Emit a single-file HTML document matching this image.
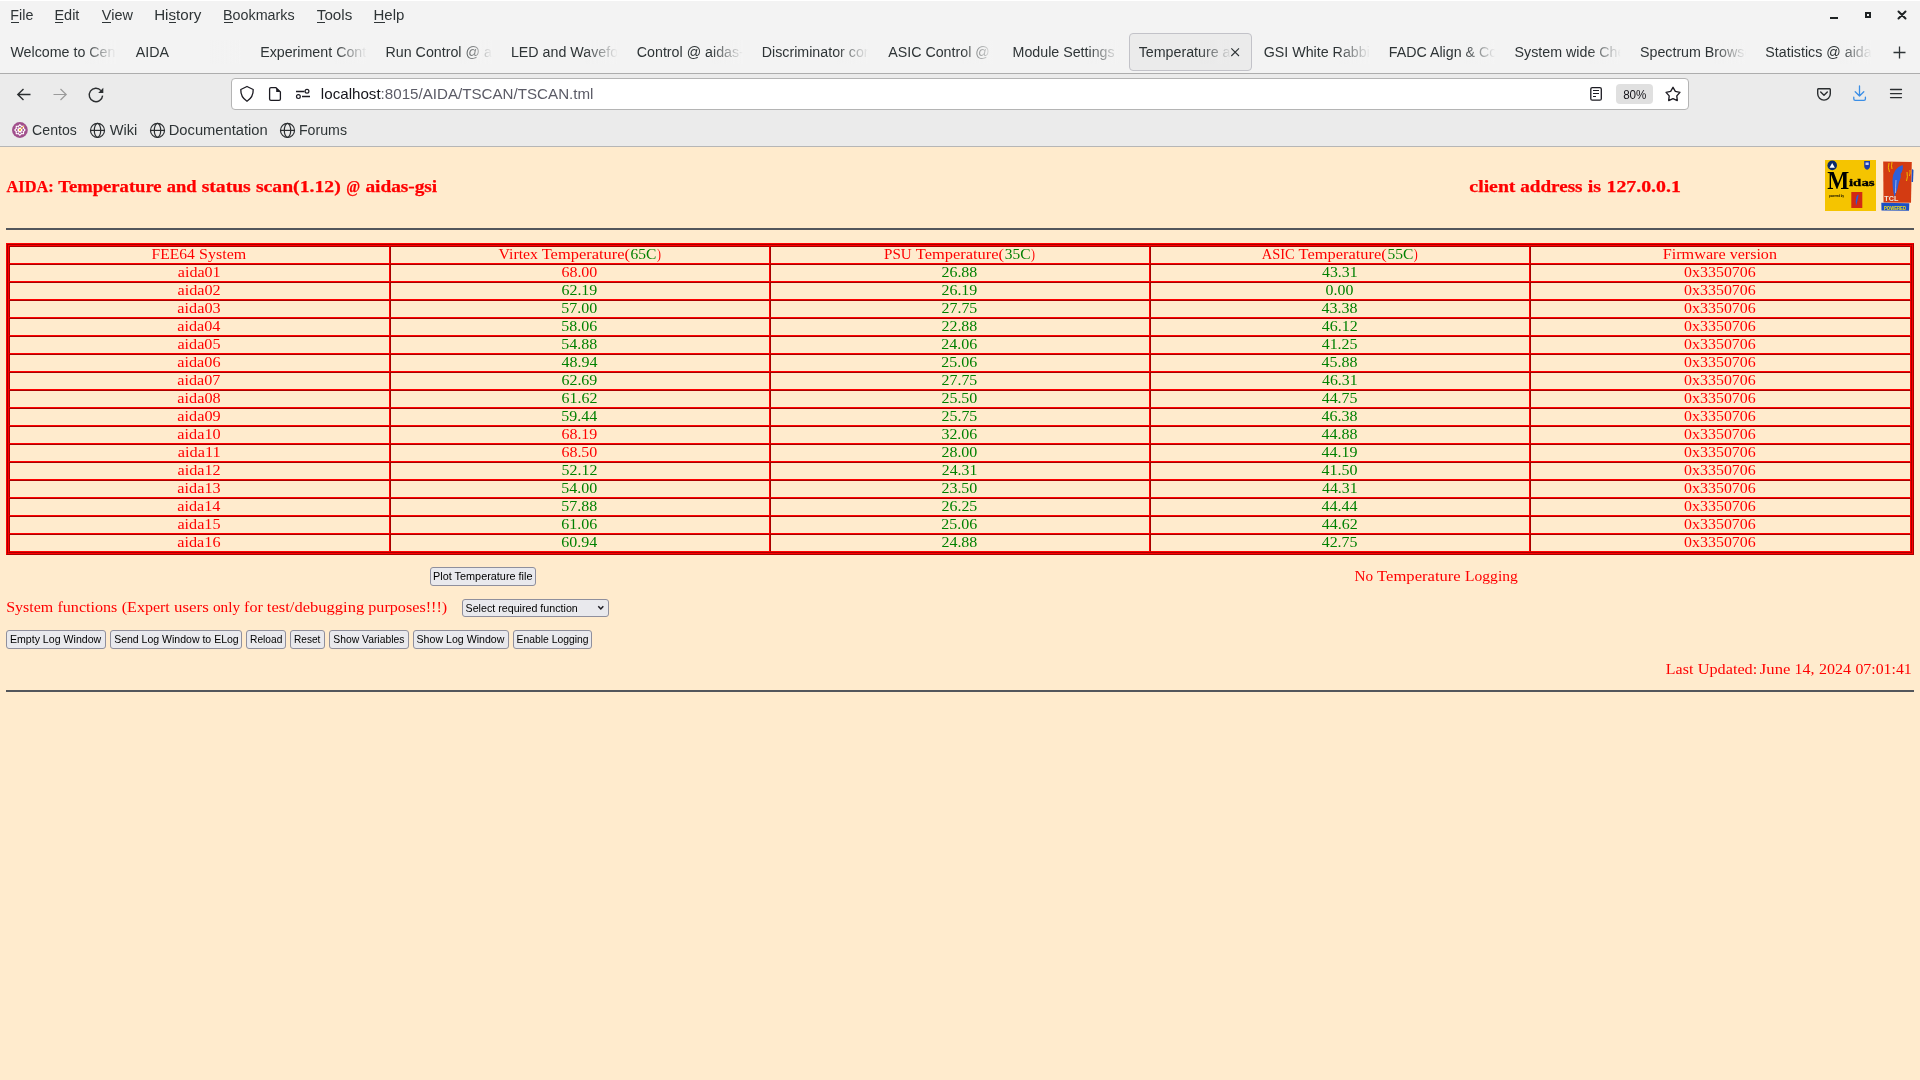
<!DOCTYPE html>
<html><head><meta charset="utf-8"><title>Temperature and status scan</title>
<style>
html,body{margin:0;padding:0}
body{width:1920px;height:1080px;overflow:hidden;position:relative;background:#ffebcd;font-family:"Liberation Sans",sans-serif}
.a{position:absolute}
td,th{box-sizing:border-box;height:18px;padding:0;border-style:solid;border-width:1px;border-color:#a80000 #ff0000 #ff0000 #a80000}
.btn{position:absolute;box-sizing:border-box;border:1px solid #8f8f9d;border-radius:3px;background:#e9e9ed}
svg{position:absolute;left:0;top:0;overflow:visible;will-change:transform}
</style></head><body>
<!-- browser chrome -->
<div class="a" style="left:0;top:0;width:1920px;height:73px;background:#f3f3f3"></div>
<div class="a" style="left:0;top:0;width:1920px;height:1px;background:#ffffff"></div>
<div class="a" style="left:0;top:73px;width:1920px;height:1px;background:#adadad"></div>
<div class="a" style="left:0;top:74px;width:1920px;height:72px;background:#ebebeb"></div>
<div class="a" style="left:0;top:146px;width:1920px;height:1px;background:#b6b6b6"></div>
<div class="a" style="left:11px;top:22px;width:8px;height:1px;background:#2e3436"></div>
<div class="a" style="left:55px;top:22px;width:8px;height:1px;background:#2e3436"></div>
<div class="a" style="left:102px;top:22px;width:9px;height:1px;background:#2e3436"></div>
<div class="a" style="left:169px;top:22px;width:7px;height:1px;background:#2e3436"></div>
<div class="a" style="left:224px;top:22px;width:9px;height:1px;background:#2e3436"></div>
<div class="a" style="left:317px;top:22px;width:8px;height:1px;background:#2e3436"></div>
<div class="a" style="left:374px;top:22px;width:11px;height:1px;background:#2e3436"></div>
<div class="a" style="left:1129px;top:33px;width:123px;height:38px;box-sizing:border-box;border:1px solid #c2c2c8;border-radius:4px;background:#ebebeb"></div>
<div class="a" style="left:231px;top:78px;width:1458px;height:32px;box-sizing:border-box;border:1px solid #b4b4b4;border-radius:4px;background:#ffffff"></div>
<div class="a" style="left:1616px;top:84px;width:37px;height:20px;border-radius:4px;background:#e0e0e0"></div>
<!-- page -->
<div class="a" style="left:6px;top:228px;width:1908px;height:2px;background:#53565b"></div>
<div class="a" style="left:6px;top:690px;width:1908px;height:2px;background:#53565b"></div>
<div class="a" style="left:6px;top:243px;width:1908px;height:312px;box-sizing:border-box;border:1px solid;border-color:#ff0000 #a80000 #a80000 #ff0000"></div>
<div class="a" style="left:7px;top:244px;width:1906px;height:310px;box-sizing:border-box;border:1px solid;border-color:#a80000 #ff0000 #ff0000 #a80000"></div>
<div class="a" style="left:8px;top:245px;width:1904px;height:308px;box-sizing:border-box;border:1px solid;border-color:#ff0000 #a80000 #a80000 #ff0000"></div>
<table class="a" style="left:9px;top:246px;border-collapse:separate;border-spacing:0;table-layout:fixed;width:1902px"><tr><th style="width:381px"></th><th style="width:380px"></th><th style="width:380px"></th><th style="width:380px"></th><th style="width:381px"></th></tr>
<tr><td style="width:381px"></td><td style="width:380px"></td><td style="width:380px"></td><td style="width:380px"></td><td style="width:381px"></td></tr>
<tr><td style="width:381px"></td><td style="width:380px"></td><td style="width:380px"></td><td style="width:380px"></td><td style="width:381px"></td></tr>
<tr><td style="width:381px"></td><td style="width:380px"></td><td style="width:380px"></td><td style="width:380px"></td><td style="width:381px"></td></tr>
<tr><td style="width:381px"></td><td style="width:380px"></td><td style="width:380px"></td><td style="width:380px"></td><td style="width:381px"></td></tr>
<tr><td style="width:381px"></td><td style="width:380px"></td><td style="width:380px"></td><td style="width:380px"></td><td style="width:381px"></td></tr>
<tr><td style="width:381px"></td><td style="width:380px"></td><td style="width:380px"></td><td style="width:380px"></td><td style="width:381px"></td></tr>
<tr><td style="width:381px"></td><td style="width:380px"></td><td style="width:380px"></td><td style="width:380px"></td><td style="width:381px"></td></tr>
<tr><td style="width:381px"></td><td style="width:380px"></td><td style="width:380px"></td><td style="width:380px"></td><td style="width:381px"></td></tr>
<tr><td style="width:381px"></td><td style="width:380px"></td><td style="width:380px"></td><td style="width:380px"></td><td style="width:381px"></td></tr>
<tr><td style="width:381px"></td><td style="width:380px"></td><td style="width:380px"></td><td style="width:380px"></td><td style="width:381px"></td></tr>
<tr><td style="width:381px"></td><td style="width:380px"></td><td style="width:380px"></td><td style="width:380px"></td><td style="width:381px"></td></tr>
<tr><td style="width:381px"></td><td style="width:380px"></td><td style="width:380px"></td><td style="width:380px"></td><td style="width:381px"></td></tr>
<tr><td style="width:381px"></td><td style="width:380px"></td><td style="width:380px"></td><td style="width:380px"></td><td style="width:381px"></td></tr>
<tr><td style="width:381px"></td><td style="width:380px"></td><td style="width:380px"></td><td style="width:380px"></td><td style="width:381px"></td></tr>
<tr><td style="width:381px"></td><td style="width:380px"></td><td style="width:380px"></td><td style="width:380px"></td><td style="width:381px"></td></tr>
<tr><td style="width:381px"></td><td style="width:380px"></td><td style="width:380px"></td><td style="width:380px"></td><td style="width:381px"></td></tr></table>
<div class="btn" style="left:430px;top:567px;width:106px;height:19px"></div>
<div class="btn" style="left:6px;top:630px;width:100px;height:19px"></div>
<div class="btn" style="left:110px;top:630px;width:132px;height:19px"></div>
<div class="btn" style="left:246px;top:630px;width:40px;height:19px"></div>
<div class="btn" style="left:290px;top:630px;width:35px;height:19px"></div>
<div class="btn" style="left:329px;top:630px;width:80px;height:19px"></div>
<div class="btn" style="left:413px;top:630px;width:96px;height:19px"></div>
<div class="btn" style="left:513px;top:630px;width:79px;height:19px"></div>
<div class="btn" style="left:462px;top:599px;width:147px;height:18px"></div>
<svg width="1920" height="1080" viewBox="0 0 1920 1080">
<defs><clipPath id="tc0"><rect x="8.4" y="36" width="108" height="30"/></clipPath>
<linearGradient id="tg0" x1="0" x2="1" y1="0" y2="0"><stop offset="0" stop-color="#f3f3f3" stop-opacity="0"/><stop offset="1" stop-color="#f3f3f3" stop-opacity="1"/></linearGradient>
<clipPath id="tc1"><rect x="133.8" y="36" width="108" height="30"/></clipPath>
<linearGradient id="tg1" x1="0" x2="1" y1="0" y2="0"><stop offset="0" stop-color="#f3f3f3" stop-opacity="0"/><stop offset="1" stop-color="#f3f3f3" stop-opacity="1"/></linearGradient>
<clipPath id="tc2"><rect x="259.2" y="36" width="108" height="30"/></clipPath>
<linearGradient id="tg2" x1="0" x2="1" y1="0" y2="0"><stop offset="0" stop-color="#f3f3f3" stop-opacity="0"/><stop offset="1" stop-color="#f3f3f3" stop-opacity="1"/></linearGradient>
<clipPath id="tc3"><rect x="384.6" y="36" width="108" height="30"/></clipPath>
<linearGradient id="tg3" x1="0" x2="1" y1="0" y2="0"><stop offset="0" stop-color="#f3f3f3" stop-opacity="0"/><stop offset="1" stop-color="#f3f3f3" stop-opacity="1"/></linearGradient>
<clipPath id="tc4"><rect x="510.0" y="36" width="108" height="30"/></clipPath>
<linearGradient id="tg4" x1="0" x2="1" y1="0" y2="0"><stop offset="0" stop-color="#f3f3f3" stop-opacity="0"/><stop offset="1" stop-color="#f3f3f3" stop-opacity="1"/></linearGradient>
<clipPath id="tc5"><rect x="635.4" y="36" width="108" height="30"/></clipPath>
<linearGradient id="tg5" x1="0" x2="1" y1="0" y2="0"><stop offset="0" stop-color="#f3f3f3" stop-opacity="0"/><stop offset="1" stop-color="#f3f3f3" stop-opacity="1"/></linearGradient>
<clipPath id="tc6"><rect x="760.8" y="36" width="108" height="30"/></clipPath>
<linearGradient id="tg6" x1="0" x2="1" y1="0" y2="0"><stop offset="0" stop-color="#f3f3f3" stop-opacity="0"/><stop offset="1" stop-color="#f3f3f3" stop-opacity="1"/></linearGradient>
<clipPath id="tc7"><rect x="886.2" y="36" width="108" height="30"/></clipPath>
<linearGradient id="tg7" x1="0" x2="1" y1="0" y2="0"><stop offset="0" stop-color="#f3f3f3" stop-opacity="0"/><stop offset="1" stop-color="#f3f3f3" stop-opacity="1"/></linearGradient>
<clipPath id="tc8"><rect x="1011.6" y="36" width="108" height="30"/></clipPath>
<linearGradient id="tg8" x1="0" x2="1" y1="0" y2="0"><stop offset="0" stop-color="#f3f3f3" stop-opacity="0"/><stop offset="1" stop-color="#f3f3f3" stop-opacity="1"/></linearGradient>
<clipPath id="tc9"><rect x="1137.0" y="36" width="95" height="30"/></clipPath>
<linearGradient id="tg9" x1="0" x2="1" y1="0" y2="0"><stop offset="0" stop-color="#ebebeb" stop-opacity="0"/><stop offset="1" stop-color="#ebebeb" stop-opacity="1"/></linearGradient>
<clipPath id="tc10"><rect x="1262.4" y="36" width="108" height="30"/></clipPath>
<linearGradient id="tg10" x1="0" x2="1" y1="0" y2="0"><stop offset="0" stop-color="#f3f3f3" stop-opacity="0"/><stop offset="1" stop-color="#f3f3f3" stop-opacity="1"/></linearGradient>
<clipPath id="tc11"><rect x="1387.8" y="36" width="108" height="30"/></clipPath>
<linearGradient id="tg11" x1="0" x2="1" y1="0" y2="0"><stop offset="0" stop-color="#f3f3f3" stop-opacity="0"/><stop offset="1" stop-color="#f3f3f3" stop-opacity="1"/></linearGradient>
<clipPath id="tc12"><rect x="1513.2" y="36" width="108" height="30"/></clipPath>
<linearGradient id="tg12" x1="0" x2="1" y1="0" y2="0"><stop offset="0" stop-color="#f3f3f3" stop-opacity="0"/><stop offset="1" stop-color="#f3f3f3" stop-opacity="1"/></linearGradient>
<clipPath id="tc13"><rect x="1638.6" y="36" width="108" height="30"/></clipPath>
<linearGradient id="tg13" x1="0" x2="1" y1="0" y2="0"><stop offset="0" stop-color="#f3f3f3" stop-opacity="0"/><stop offset="1" stop-color="#f3f3f3" stop-opacity="1"/></linearGradient>
<clipPath id="tc14"><rect x="1764.0" y="36" width="108" height="30"/></clipPath>
<linearGradient id="tg14" x1="0" x2="1" y1="0" y2="0"><stop offset="0" stop-color="#f3f3f3" stop-opacity="0"/><stop offset="1" stop-color="#f3f3f3" stop-opacity="1"/></linearGradient></defs>
<!-- window controls -->
<rect x="1830" y="17" width="8" height="2" fill="#1f2324"/>
<rect x="1866" y="13" width="4" height="4" fill="none" stroke="#1f2324" stroke-width="2"/>
<path d="M1898.5 11.5 L1905.5 18.5 M1905.5 11.5 L1898.5 18.5" stroke="#1f2324" stroke-width="2" stroke-linecap="round"/>
<path d="M1899.5 46.5 V58.5 M1893.5 52.5 H1905.5" stroke="#2e3436" stroke-width="1.3"/>
<!-- tab close -->

<!-- nav -->
<path d="M17.5 94.5 H30.5 M23.5 89 L17.8 94.5 L23.5 100" fill="none" stroke="#2b2e30" stroke-width="1.4"/>
<path d="M66.5 94.5 H53.5 M60.5 89 L66.2 94.5 L60.5 100" fill="none" stroke="#9a9a9a" stroke-width="1.2"/>
<path d="M102.6 95.6 A6.7 6.7 0 1 1 101 90.6" fill="none" stroke="#2b2e30" stroke-width="1.4"/>
<path d="M98.2 92.9 L103.3 92.9 L103.3 87.8 Z" fill="#2b2e30"/>
<!-- url icons -->
<path d="M247 86.5 L253.2 89.5 Q253.5 97 247 101.3 Q240.5 97 240.8 89.5 Z" fill="none" stroke="#1c1b22" stroke-width="1.3" stroke-linejoin="round"/>
<path d="M276 87.7 H271 Q269.6 87.7 269.6 89 V99 Q269.6 100.3 271 100.3 H279 Q280.4 100.3 280.4 99 V92 Z" fill="none" stroke="#1c1b22" stroke-width="1.3" stroke-linejoin="round"/>
<path d="M276.2 87.7 L280.4 92 L276.2 92 Z" fill="#1c1b22"/>
<path d="M296 91.5 H304.5 M302 96.5 H310" stroke="#1c1b22" stroke-width="1.3"/>
<circle cx="307" cy="91.3" r="1.9" fill="none" stroke="#1c1b22" stroke-width="1.2"/>
<circle cx="298.4" cy="96.6" r="1.9" fill="none" stroke="#1c1b22" stroke-width="1.2"/>
<!-- reader -->
<rect x="1590.8" y="87.6" width="10.5" height="12.6" rx="1.5" fill="none" stroke="#1c1b22" stroke-width="1.3"/>
<path d="M1593 90.5 H1599 M1593 93.5 H1599 M1593 96.5 H1596" stroke="#1c1b22" stroke-width="1.1"/>
<!-- star -->
<polygon points="1673.00,87.30 1670.65,91.36 1666.06,92.34 1669.20,95.84 1668.71,100.51 1673.00,98.60 1677.29,100.51 1676.80,95.84 1679.94,92.34 1675.35,91.36" fill="none" stroke="#1c1b22" stroke-width="1.35" stroke-linejoin="round"/>
<!-- pocket -->
<path d="M1818.3 88.7 H1829.7 Q1830.3 88.7 1830.3 89.5 V93.8 A6.3 6.3 0 0 1 1817.7 93.8 V89.5 Q1817.7 88.7 1818.3 88.7 Z" fill="none" stroke="#2b2e30" stroke-width="1.4"/>
<path d="M1820.7 92 L1824 95.2 L1827.3 92" fill="none" stroke="#2b2e30" stroke-width="1.4" stroke-linecap="round" stroke-linejoin="round"/>
<!-- download -->
<path d="M1859.5 86 V96 M1855.2 91.8 L1859.5 96 L1863.8 91.8" fill="none" stroke="#3a8ee6" stroke-width="1.3" stroke-linecap="round" stroke-linejoin="round"/>
<path d="M1853.8 97.2 V99 Q1853.8 100.4 1855.2 100.4 H1864 Q1865.4 100.4 1865.4 99 V97.2" fill="none" stroke="#3a8ee6" stroke-width="1.3" stroke-linecap="round"/>
<!-- hamburger -->
<path d="M1890.5 89.5 H1901.5 M1890.5 93.6 H1901.5 M1890.5 97.6 H1901.5" stroke="#2b2e30" stroke-width="1.3" stroke-linecap="round"/>
<!-- bookmark icons -->
<circle cx="19.9" cy="130.0" r="7.9" fill="#a14f8c"/><polygon points="19.90,124.10 18.14,125.75 15.73,125.83 15.65,128.24 14.00,130.00 15.65,131.76 15.73,134.17 18.14,134.25 19.90,135.90 21.66,134.25 24.07,134.17 24.15,131.76 25.80,130.00 24.15,128.24 24.07,125.83 21.66,125.75" fill="#ffffff"/><g fill="#a14f8c"><circle cx="19.90" cy="126.80" r="1"/><circle cx="17.64" cy="127.74" r="1"/><circle cx="16.70" cy="130.00" r="1"/><circle cx="17.64" cy="132.26" r="1"/><circle cx="19.90" cy="133.20" r="1"/><circle cx="22.16" cy="132.26" r="1"/><circle cx="23.10" cy="130.00" r="1"/><circle cx="22.16" cy="127.74" r="1"/></g><rect x="19.0" y="129.1" width="1.8" height="1.8" fill="#efa724"/><path d="M19.9 130.0 L24.2 125.7" stroke="#efa724" stroke-width="0.9"/>
<g fill="none" stroke="#2b2e30" stroke-width="1.2">
<circle cx="97.5" cy="130.4" r="7"/><ellipse cx="97.5" cy="130.4" rx="3.2" ry="7"/><path d="M90.5 130.4 H104.5"/>
<circle cx="157.5" cy="130.4" r="7"/><ellipse cx="157.5" cy="130.4" rx="3.2" ry="7"/><path d="M150.5 130.4 H164.5"/>
<circle cx="287.5" cy="130.4" r="7"/><ellipse cx="287.5" cy="130.4" rx="3.2" ry="7"/><path d="M280.5 130.4 H294.5"/>
</g>
<!-- select chevron -->
<path d="M598.3 606.3 L600.8 609 L603.3 606.3" fill="none" stroke="#1c1b22" stroke-width="1.5"/>
<!-- midas logo -->
<rect x="1825" y="160" width="51" height="51" fill="#f5c400"/>
<circle cx="1832.2" cy="165.4" r="4.8" fill="#0b2a6b"/>
<path d="M1829.5 167.8 L1832.2 163 L1834.9 167.8 Z" fill="#ffffff"/>
<path d="M1864.2 161 H1870 V166 Q1870 168.8 1867.1 169.8 Q1864.2 168.8 1864.2 166 Z" fill="#1a3aa8"/>
<path d="M1865.5 162.5 H1868.7 V165 H1865.5 Z" fill="#c8d0f0"/>
<text x="1827.2" y="188.5" font-family="Liberation Serif" font-weight="bold" font-size="25" fill="#000" textLength="22" lengthAdjust="spacingAndGlyphs" stroke="#ffe000" stroke-width="0.4" paint-order="stroke">M</text>
<text x="1849" y="185.8" font-family="Liberation Serif" font-weight="bold" font-size="11" fill="#000" textLength="25.6" lengthAdjust="spacingAndGlyphs" stroke="#000" stroke-width="0.3">idas</text>
<text x="1829" y="197" font-family="Liberation Sans" font-weight="bold" font-size="3.8" fill="#000" textLength="15" lengthAdjust="spacingAndGlyphs">powered by</text>
<rect x="1851.3" y="192" width="11" height="16" fill="#d22a12"/>
<path d="M1857.8 194.5 Q1855 198 1856 206 Q1857.8 200 1858.6 195 Z" fill="#2a5ad8"/>
<!-- tcl logo -->
<path d="M1883.2 161.5 L1911.8 162 L1911 202.8 L1883.5 202.5 Z" fill="#d33b12"/>
<path d="M1881.3 202.8 L1909.3 203.2 L1909 210.8 L1881.5 210.5 Z" fill="#1b4fc4"/>
<path d="M1912 169 L1913.5 170 L1913 182 L1911.5 182 Z" fill="#1b4fc4"/>
<path d="M1902.5 165 Q1893 168 1892.5 180 Q1892.5 190 1894.5 197 Q1898 189 1899 182 Q1901.5 177 1900.5 174 Q1904 169 1902.5 165 Z" fill="#2f5fd8"/><path d="M1896 180 Q1895.5 188 1895.5 193" stroke="#e8e8f0" stroke-width="0.6" fill="none"/>
<path d="M1889 163 Q1887.5 168 1889.5 172 M1892 162 Q1891 166 1892 169 M1906.5 181 Q1908 177 1907 172 M1909.5 176 Q1910.5 173 1910 170" stroke="#f2b800" stroke-width="1" fill="none"/>
<text x="1884.3" y="200.8" font-family="Liberation Sans" font-weight="bold" font-size="6.5" fill="#f0e8e0" textLength="14" lengthAdjust="spacingAndGlyphs">TCL</text>
<text x="1884" y="209.5" font-family="Liberation Sans" font-weight="bold" font-size="6" fill="#f2e21a" textLength="22" lengthAdjust="spacingAndGlyphs">POWERED</text>
<text x="10.35" y="20" font-family="Liberation Sans" font-size="15.5" fill="#2e3436" textLength="23.01" lengthAdjust="spacingAndGlyphs">File</text>
<text x="54.43" y="20" font-family="Liberation Sans" font-size="15.5" fill="#2e3436" textLength="24.95" lengthAdjust="spacingAndGlyphs">Edit</text>
<text x="101.80" y="20" font-family="Liberation Sans" font-size="15.5" fill="#2e3436" textLength="31.05" lengthAdjust="spacingAndGlyphs">View</text>
<text x="154.18" y="20" font-family="Liberation Sans" font-size="15.5" fill="#2e3436" textLength="47.10" lengthAdjust="spacingAndGlyphs">History</text>
<text x="223.04" y="20" font-family="Liberation Sans" font-size="15.5" fill="#2e3436" textLength="71.64" lengthAdjust="spacingAndGlyphs">Bookmarks</text>
<text x="316.83" y="20" font-family="Liberation Sans" font-size="15.5" fill="#2e3436" textLength="35.42" lengthAdjust="spacingAndGlyphs">Tools</text>
<text x="373.49" y="20" font-family="Liberation Sans" font-size="15.5" fill="#2e3436" textLength="30.82" lengthAdjust="spacingAndGlyphs">Help</text>
<g clip-path="url(#tc0)"><text x="10.40" y="57" font-family="Liberation Sans" font-size="15.5" fill="#2e3436" transform="translate(10.40,0) scale(0.92,1) translate(-10.40,0)">Welcome to CentOS</text></g>
<rect x="83.4" y="40" width="33" height="24" fill="url(#tg0)"/><rect x="115.4" y="40" width="3" height="24" fill="#f3f3f3"/>
<g clip-path="url(#tc1)"><text x="135.80" y="57" font-family="Liberation Sans" font-size="15.5" fill="#2e3436" transform="translate(135.80,0) scale(0.92,1) translate(-135.80,0)">AIDA</text></g>
<rect x="208.8" y="40" width="33" height="24" fill="url(#tg1)"/><rect x="240.8" y="40" width="3" height="24" fill="#f3f3f3"/>
<g clip-path="url(#tc2)"><text x="260.05" y="57" font-family="Liberation Sans" font-size="15.5" fill="#2e3436" transform="translate(261.20,0) scale(0.92,1) translate(-261.20,0)">Experiment Control</text></g>
<rect x="334.2" y="40" width="33" height="24" fill="url(#tg2)"/><rect x="366.2" y="40" width="3" height="24" fill="#f3f3f3"/>
<g clip-path="url(#tc3)"><text x="385.45" y="57" font-family="Liberation Sans" font-size="15.5" fill="#2e3436" transform="translate(386.60,0) scale(0.92,1) translate(-386.60,0)">Run Control @ aidas-gsi</text></g>
<rect x="459.6" y="40" width="33" height="24" fill="url(#tg3)"/><rect x="491.6" y="40" width="3" height="24" fill="#f3f3f3"/>
<g clip-path="url(#tc4)"><text x="510.85" y="57" font-family="Liberation Sans" font-size="15.5" fill="#2e3436" transform="translate(512.00,0) scale(0.92,1) translate(-512.00,0)">LED and Waveform</text></g>
<rect x="585.0" y="40" width="33" height="24" fill="url(#tg4)"/><rect x="617.0" y="40" width="3" height="24" fill="#f3f3f3"/>
<g clip-path="url(#tc5)"><text x="636.71" y="57" font-family="Liberation Sans" font-size="15.5" fill="#2e3436" transform="translate(637.40,0) scale(0.92,1) translate(-637.40,0)">Control @ aidas-gsi</text></g>
<rect x="710.4" y="40" width="33" height="24" fill="url(#tg5)"/><rect x="742.4" y="40" width="3" height="24" fill="#f3f3f3"/>
<g clip-path="url(#tc6)"><text x="761.65" y="57" font-family="Liberation Sans" font-size="15.5" fill="#2e3436" transform="translate(762.80,0) scale(0.92,1) translate(-762.80,0)">Discriminator control</text></g>
<rect x="835.8" y="40" width="33" height="24" fill="url(#tg6)"/><rect x="867.8" y="40" width="3" height="24" fill="#f3f3f3"/>
<g clip-path="url(#tc7)"><text x="888.20" y="57" font-family="Liberation Sans" font-size="15.5" fill="#2e3436" transform="translate(888.20,0) scale(0.92,1) translate(-888.20,0)">ASIC Control @ aidas-gsi</text></g>
<rect x="961.2" y="40" width="33" height="24" fill="url(#tg7)"/><rect x="993.2" y="40" width="3" height="24" fill="#f3f3f3"/>
<g clip-path="url(#tc8)"><text x="1012.45" y="57" font-family="Liberation Sans" font-size="15.5" fill="#2e3436" transform="translate(1013.60,0) scale(0.92,1) translate(-1013.60,0)">Module Settings</text></g>
<rect x="1086.6" y="40" width="33" height="24" fill="url(#tg8)"/><rect x="1118.6" y="40" width="3" height="24" fill="#f3f3f3"/>
<g clip-path="url(#tc9)"><text x="1138.66" y="57" font-family="Liberation Sans" font-size="15.5" fill="#2e3436" transform="translate(1139.00,0) scale(0.92,1) translate(-1139.00,0)">Temperature and status</text></g>
<rect x="1200.0" y="40" width="32" height="24" fill="url(#tg9)"/><rect x="1231.0" y="40" width="3" height="24" fill="#ebebeb"/>
<g clip-path="url(#tc10)"><text x="1263.71" y="57" font-family="Liberation Sans" font-size="15.5" fill="#2e3436" transform="translate(1264.40,0) scale(0.92,1) translate(-1264.40,0)">GSI White Rabbit</text></g>
<rect x="1337.4" y="40" width="33" height="24" fill="url(#tg10)"/><rect x="1369.4" y="40" width="3" height="24" fill="#f3f3f3"/>
<g clip-path="url(#tc11)"><text x="1388.65" y="57" font-family="Liberation Sans" font-size="15.5" fill="#2e3436" transform="translate(1389.80,0) scale(0.92,1) translate(-1389.80,0)">FADC Align &amp; Control</text></g>
<rect x="1462.8" y="40" width="33" height="24" fill="url(#tg11)"/><rect x="1494.8" y="40" width="3" height="24" fill="#f3f3f3"/>
<g clip-path="url(#tc12)"><text x="1514.51" y="57" font-family="Liberation Sans" font-size="15.5" fill="#2e3436" transform="translate(1515.20,0) scale(0.92,1) translate(-1515.20,0)">System wide Checks</text></g>
<rect x="1588.2" y="40" width="33" height="24" fill="url(#tg12)"/><rect x="1620.2" y="40" width="3" height="24" fill="#f3f3f3"/>
<g clip-path="url(#tc13)"><text x="1639.91" y="57" font-family="Liberation Sans" font-size="15.5" fill="#2e3436" transform="translate(1640.60,0) scale(0.92,1) translate(-1640.60,0)">Spectrum Browser</text></g>
<rect x="1713.6" y="40" width="33" height="24" fill="url(#tg13)"/><rect x="1745.6" y="40" width="3" height="24" fill="#f3f3f3"/>
<g clip-path="url(#tc14)"><text x="1765.31" y="57" font-family="Liberation Sans" font-size="15.5" fill="#2e3436" transform="translate(1766.00,0) scale(0.92,1) translate(-1766.00,0)">Statistics @ aidas-gsi</text></g>
<rect x="1839.0" y="40" width="33" height="24" fill="url(#tg14)"/><rect x="1871.0" y="40" width="3" height="24" fill="#f3f3f3"/>
<text x="320.89" y="99" font-family="Liberation Sans" font-size="15" textLength="272.58" lengthAdjust="spacingAndGlyphs" fill="#5b5b66"><tspan fill="#15141a">localhost</tspan>:8015/AIDA/TSCAN/TSCAN.tml</text>
<text x="1623.15" y="99" font-family="Liberation Sans" font-size="13" fill="#15141a" textLength="23.30" lengthAdjust="spacingAndGlyphs">80%</text>
<text x="32.12" y="135" font-family="Liberation Sans" font-size="15.5" fill="#2e3436" textLength="44.73" lengthAdjust="spacingAndGlyphs">Centos</text>
<text x="109.70" y="135" font-family="Liberation Sans" font-size="15.5" fill="#2e3436" textLength="27.66" lengthAdjust="spacingAndGlyphs">Wiki</text>
<text x="168.71" y="135" font-family="Liberation Sans" font-size="15.5" fill="#2e3436" textLength="99.05" lengthAdjust="spacingAndGlyphs">Documentation</text>
<text x="298.96" y="135" font-family="Liberation Sans" font-size="15.5" fill="#2e3436" textLength="48.03" lengthAdjust="spacingAndGlyphs">Forums</text>
<text x="6.47" y="192" font-family="Liberation Serif" font-size="16" font-weight="bold" fill="#ff0000" textLength="47.25" lengthAdjust="spacingAndGlyphs" stroke="#ff0000" stroke-width="0.25">AIDA:</text>
<text x="58.37" y="192" font-family="Liberation Serif" font-size="16" font-weight="bold" fill="#ff0000" textLength="103.23" lengthAdjust="spacingAndGlyphs" stroke="#ff0000" stroke-width="0.25">Temperature</text>
<text x="166.76" y="192" font-family="Liberation Serif" font-size="16" font-weight="bold" fill="#ff0000" textLength="29.78" lengthAdjust="spacingAndGlyphs" stroke="#ff0000" stroke-width="0.25">and</text>
<text x="201.67" y="192" font-family="Liberation Serif" font-size="16" font-weight="bold" fill="#ff0000" textLength="49.08" lengthAdjust="spacingAndGlyphs" stroke="#ff0000" stroke-width="0.25">status</text>
<text x="255.91" y="192" font-family="Liberation Serif" font-size="16" font-weight="bold" fill="#ff0000" textLength="84.80" lengthAdjust="spacingAndGlyphs" stroke="#ff0000" stroke-width="0.25">scan(1.12)</text>
<text x="346.30" y="192" font-family="Liberation Serif" font-size="16" font-weight="bold" fill="#ff0000" textLength="13.91" lengthAdjust="spacingAndGlyphs" stroke="#ff0000" stroke-width="0.25">@</text>
<text x="365.40" y="192" font-family="Liberation Serif" font-size="16" font-weight="bold" fill="#ff0000" textLength="71.84" lengthAdjust="spacingAndGlyphs" stroke="#ff0000" stroke-width="0.25">aidas-gsi</text>
<text x="1469.38" y="192" font-family="Liberation Serif" font-size="16" font-weight="bold" fill="#ff0000" textLength="46.08" lengthAdjust="spacingAndGlyphs" stroke="#ff0000" stroke-width="0.25">client</text>
<text x="1520.32" y="192" font-family="Liberation Serif" font-size="16" font-weight="bold" fill="#ff0000" textLength="62.19" lengthAdjust="spacingAndGlyphs" stroke="#ff0000" stroke-width="0.25">address</text>
<text x="1587.78" y="192" font-family="Liberation Serif" font-size="16" font-weight="bold" fill="#ff0000" textLength="13.34" lengthAdjust="spacingAndGlyphs" stroke="#ff0000" stroke-width="0.25">is</text>
<text x="1606.50" y="192" font-family="Liberation Serif" font-size="16" font-weight="bold" fill="#ff0000" textLength="74.35" lengthAdjust="spacingAndGlyphs" stroke="#ff0000" stroke-width="0.25">127.0.0.1</text>
<text x="151.59" y="259" font-family="Liberation Serif" font-size="14.25" fill="#ff0000" textLength="43.14" lengthAdjust="spacingAndGlyphs">FEE64</text>
<text x="199.13" y="259" font-family="Liberation Serif" font-size="14.25" fill="#ff0000" textLength="47.10" lengthAdjust="spacingAndGlyphs">System</text>
<text x="1662.70" y="259" font-family="Liberation Serif" font-size="14.25" fill="#ff0000" textLength="63.01" lengthAdjust="spacingAndGlyphs">Firmware</text>
<text x="1729.69" y="259" font-family="Liberation Serif" font-size="14.25" fill="#ff0000" textLength="47.21" lengthAdjust="spacingAndGlyphs">version</text>
<text x="498.55" y="259" font-family="Liberation Serif" font-size="14.25" fill="#ff0000" textLength="39.46" lengthAdjust="spacingAndGlyphs">Virtex</text>
<text x="541.72" y="259" font-family="Liberation Serif" font-size="14.25" fill="#ff0000" textLength="88.27" lengthAdjust="spacingAndGlyphs">Temperature(</text>
<text x="630.58" y="259" font-family="Liberation Serif" font-size="14.25" fill="#008000" textLength="25.88" lengthAdjust="spacingAndGlyphs">65C</text>
<text x="656.92" y="259" font-family="Liberation Serif" font-size="14.25" fill="#ff0000" textLength="3.96" lengthAdjust="spacingAndGlyphs">)</text>
<text x="884.10" y="259" font-family="Liberation Serif" font-size="14.25" fill="#ff0000" textLength="27.68" lengthAdjust="spacingAndGlyphs">PSU</text>
<text x="915.82" y="259" font-family="Liberation Serif" font-size="14.25" fill="#ff0000" textLength="88.27" lengthAdjust="spacingAndGlyphs">Temperature(</text>
<text x="1004.81" y="259" font-family="Liberation Serif" font-size="14.25" fill="#008000" textLength="25.74" lengthAdjust="spacingAndGlyphs">35C</text>
<text x="1031.03" y="259" font-family="Liberation Serif" font-size="14.25" fill="#ff0000" textLength="3.96" lengthAdjust="spacingAndGlyphs">)</text>
<text x="1261.69" y="259" font-family="Liberation Serif" font-size="14.25" fill="#ff0000" textLength="32.98" lengthAdjust="spacingAndGlyphs">ASIC</text>
<text x="1298.56" y="259" font-family="Liberation Serif" font-size="14.25" fill="#ff0000" textLength="88.27" lengthAdjust="spacingAndGlyphs">Temperature(</text>
<text x="1387.41" y="259" font-family="Liberation Serif" font-size="14.25" fill="#008000" textLength="25.89" lengthAdjust="spacingAndGlyphs">55C</text>
<text x="1413.77" y="259" font-family="Liberation Serif" font-size="14.25" fill="#ff0000" textLength="3.96" lengthAdjust="spacingAndGlyphs">)</text>
<text x="177.81" y="277" font-family="Liberation Serif" font-size="14.25" fill="#ff0000" textLength="42.78" lengthAdjust="spacingAndGlyphs">aida01</text>
<text x="561.42" y="277" font-family="Liberation Serif" font-size="14.25" fill="#ff0000" textLength="35.94" lengthAdjust="spacingAndGlyphs">68.00</text>
<text x="941.42" y="277" font-family="Liberation Serif" font-size="14.25" fill="#008000" textLength="35.94" lengthAdjust="spacingAndGlyphs">26.88</text>
<text x="1322.04" y="277" font-family="Liberation Serif" font-size="14.25" fill="#008000" textLength="35.55" lengthAdjust="spacingAndGlyphs">43.31</text>
<text x="1684.13" y="277" font-family="Liberation Serif" font-size="14.25" fill="#ff0000" textLength="71.60" lengthAdjust="spacingAndGlyphs">0x3350706</text>
<text x="177.56" y="295" font-family="Liberation Serif" font-size="14.25" fill="#ff0000" textLength="43.15" lengthAdjust="spacingAndGlyphs">aida02</text>
<text x="561.42" y="295" font-family="Liberation Serif" font-size="14.25" fill="#008000" textLength="35.94" lengthAdjust="spacingAndGlyphs">62.19</text>
<text x="941.42" y="295" font-family="Liberation Serif" font-size="14.25" fill="#008000" textLength="35.94" lengthAdjust="spacingAndGlyphs">26.19</text>
<text x="1325.57" y="295" font-family="Liberation Serif" font-size="14.25" fill="#008000" textLength="27.79" lengthAdjust="spacingAndGlyphs">0.00</text>
<text x="1684.13" y="295" font-family="Liberation Serif" font-size="14.25" fill="#ff0000" textLength="71.60" lengthAdjust="spacingAndGlyphs">0x3350706</text>
<text x="177.37" y="313" font-family="Liberation Serif" font-size="14.25" fill="#ff0000" textLength="43.24" lengthAdjust="spacingAndGlyphs">aida03</text>
<text x="561.35" y="313" font-family="Liberation Serif" font-size="14.25" fill="#008000" textLength="35.96" lengthAdjust="spacingAndGlyphs">57.00</text>
<text x="941.49" y="313" font-family="Liberation Serif" font-size="14.25" fill="#008000" textLength="35.81" lengthAdjust="spacingAndGlyphs">27.75</text>
<text x="1321.59" y="313" font-family="Liberation Serif" font-size="14.25" fill="#008000" textLength="36.02" lengthAdjust="spacingAndGlyphs">43.38</text>
<text x="1684.13" y="313" font-family="Liberation Serif" font-size="14.25" fill="#ff0000" textLength="71.60" lengthAdjust="spacingAndGlyphs">0x3350706</text>
<text x="177.24" y="331" font-family="Liberation Serif" font-size="14.25" fill="#ff0000" textLength="43.21" lengthAdjust="spacingAndGlyphs">aida04</text>
<text x="561.28" y="331" font-family="Liberation Serif" font-size="14.25" fill="#008000" textLength="35.94" lengthAdjust="spacingAndGlyphs">58.06</text>
<text x="941.42" y="331" font-family="Liberation Serif" font-size="14.25" fill="#008000" textLength="35.94" lengthAdjust="spacingAndGlyphs">22.88</text>
<text x="1321.78" y="331" font-family="Liberation Serif" font-size="14.25" fill="#008000" textLength="35.93" lengthAdjust="spacingAndGlyphs">46.12</text>
<text x="1684.13" y="331" font-family="Liberation Serif" font-size="14.25" fill="#ff0000" textLength="71.60" lengthAdjust="spacingAndGlyphs">0x3350706</text>
<text x="177.43" y="349" font-family="Liberation Serif" font-size="14.25" fill="#ff0000" textLength="43.12" lengthAdjust="spacingAndGlyphs">aida05</text>
<text x="561.35" y="349" font-family="Liberation Serif" font-size="14.25" fill="#008000" textLength="35.96" lengthAdjust="spacingAndGlyphs">54.88</text>
<text x="941.36" y="349" font-family="Liberation Serif" font-size="14.25" fill="#008000" textLength="35.93" lengthAdjust="spacingAndGlyphs">24.06</text>
<text x="1321.66" y="349" font-family="Liberation Serif" font-size="14.25" fill="#008000" textLength="35.89" lengthAdjust="spacingAndGlyphs">41.25</text>
<text x="1684.13" y="349" font-family="Liberation Serif" font-size="14.25" fill="#ff0000" textLength="71.60" lengthAdjust="spacingAndGlyphs">0x3350706</text>
<text x="177.31" y="367" font-family="Liberation Serif" font-size="14.25" fill="#ff0000" textLength="43.23" lengthAdjust="spacingAndGlyphs">aida06</text>
<text x="561.47" y="367" font-family="Liberation Serif" font-size="14.25" fill="#008000" textLength="35.99" lengthAdjust="spacingAndGlyphs">48.94</text>
<text x="941.36" y="367" font-family="Liberation Serif" font-size="14.25" fill="#008000" textLength="35.93" lengthAdjust="spacingAndGlyphs">25.06</text>
<text x="1321.59" y="367" font-family="Liberation Serif" font-size="14.25" fill="#008000" textLength="36.02" lengthAdjust="spacingAndGlyphs">45.88</text>
<text x="1684.13" y="367" font-family="Liberation Serif" font-size="14.25" fill="#ff0000" textLength="71.60" lengthAdjust="spacingAndGlyphs">0x3350706</text>
<text x="177.37" y="385" font-family="Liberation Serif" font-size="14.25" fill="#ff0000" textLength="43.10" lengthAdjust="spacingAndGlyphs">aida07</text>
<text x="561.42" y="385" font-family="Liberation Serif" font-size="14.25" fill="#008000" textLength="35.94" lengthAdjust="spacingAndGlyphs">62.69</text>
<text x="941.49" y="385" font-family="Liberation Serif" font-size="14.25" fill="#008000" textLength="35.81" lengthAdjust="spacingAndGlyphs">27.75</text>
<text x="1322.04" y="385" font-family="Liberation Serif" font-size="14.25" fill="#008000" textLength="35.55" lengthAdjust="spacingAndGlyphs">46.31</text>
<text x="1684.13" y="385" font-family="Liberation Serif" font-size="14.25" fill="#ff0000" textLength="71.60" lengthAdjust="spacingAndGlyphs">0x3350706</text>
<text x="177.37" y="403" font-family="Liberation Serif" font-size="14.25" fill="#ff0000" textLength="43.24" lengthAdjust="spacingAndGlyphs">aida08</text>
<text x="561.61" y="403" font-family="Liberation Serif" font-size="14.25" fill="#008000" textLength="35.84" lengthAdjust="spacingAndGlyphs">61.62</text>
<text x="941.42" y="403" font-family="Liberation Serif" font-size="14.25" fill="#008000" textLength="35.94" lengthAdjust="spacingAndGlyphs">25.50</text>
<text x="1321.66" y="403" font-family="Liberation Serif" font-size="14.25" fill="#008000" textLength="35.89" lengthAdjust="spacingAndGlyphs">44.75</text>
<text x="1684.13" y="403" font-family="Liberation Serif" font-size="14.25" fill="#ff0000" textLength="71.60" lengthAdjust="spacingAndGlyphs">0x3350706</text>
<text x="177.37" y="421" font-family="Liberation Serif" font-size="14.25" fill="#ff0000" textLength="43.24" lengthAdjust="spacingAndGlyphs">aida09</text>
<text x="561.22" y="421" font-family="Liberation Serif" font-size="14.25" fill="#008000" textLength="35.93" lengthAdjust="spacingAndGlyphs">59.44</text>
<text x="941.49" y="421" font-family="Liberation Serif" font-size="14.25" fill="#008000" textLength="35.81" lengthAdjust="spacingAndGlyphs">25.75</text>
<text x="1321.59" y="421" font-family="Liberation Serif" font-size="14.25" fill="#008000" textLength="36.02" lengthAdjust="spacingAndGlyphs">46.38</text>
<text x="1684.13" y="421" font-family="Liberation Serif" font-size="14.25" fill="#ff0000" textLength="71.60" lengthAdjust="spacingAndGlyphs">0x3350706</text>
<text x="177.37" y="439" font-family="Liberation Serif" font-size="14.25" fill="#ff0000" textLength="43.24" lengthAdjust="spacingAndGlyphs">aida10</text>
<text x="561.42" y="439" font-family="Liberation Serif" font-size="14.25" fill="#ff0000" textLength="35.94" lengthAdjust="spacingAndGlyphs">68.19</text>
<text x="941.43" y="439" font-family="Liberation Serif" font-size="14.25" fill="#008000" textLength="35.80" lengthAdjust="spacingAndGlyphs">32.06</text>
<text x="1321.59" y="439" font-family="Liberation Serif" font-size="14.25" fill="#008000" textLength="36.02" lengthAdjust="spacingAndGlyphs">44.88</text>
<text x="1684.13" y="439" font-family="Liberation Serif" font-size="14.25" fill="#ff0000" textLength="71.60" lengthAdjust="spacingAndGlyphs">0x3350706</text>
<text x="177.80" y="457" font-family="Liberation Serif" font-size="14.25" fill="#ff0000" textLength="42.77" lengthAdjust="spacingAndGlyphs">aida11</text>
<text x="561.42" y="457" font-family="Liberation Serif" font-size="14.25" fill="#ff0000" textLength="35.94" lengthAdjust="spacingAndGlyphs">68.50</text>
<text x="941.42" y="457" font-family="Liberation Serif" font-size="14.25" fill="#008000" textLength="35.94" lengthAdjust="spacingAndGlyphs">28.00</text>
<text x="1321.59" y="457" font-family="Liberation Serif" font-size="14.25" fill="#008000" textLength="36.02" lengthAdjust="spacingAndGlyphs">44.19</text>
<text x="1684.13" y="457" font-family="Liberation Serif" font-size="14.25" fill="#ff0000" textLength="71.60" lengthAdjust="spacingAndGlyphs">0x3350706</text>
<text x="177.56" y="475" font-family="Liberation Serif" font-size="14.25" fill="#ff0000" textLength="43.15" lengthAdjust="spacingAndGlyphs">aida12</text>
<text x="561.54" y="475" font-family="Liberation Serif" font-size="14.25" fill="#008000" textLength="35.86" lengthAdjust="spacingAndGlyphs">52.12</text>
<text x="941.87" y="475" font-family="Liberation Serif" font-size="14.25" fill="#008000" textLength="35.47" lengthAdjust="spacingAndGlyphs">24.31</text>
<text x="1321.59" y="475" font-family="Liberation Serif" font-size="14.25" fill="#008000" textLength="36.02" lengthAdjust="spacingAndGlyphs">41.50</text>
<text x="1684.13" y="475" font-family="Liberation Serif" font-size="14.25" fill="#ff0000" textLength="71.60" lengthAdjust="spacingAndGlyphs">0x3350706</text>
<text x="177.37" y="493" font-family="Liberation Serif" font-size="14.25" fill="#ff0000" textLength="43.24" lengthAdjust="spacingAndGlyphs">aida13</text>
<text x="561.35" y="493" font-family="Liberation Serif" font-size="14.25" fill="#008000" textLength="35.96" lengthAdjust="spacingAndGlyphs">54.00</text>
<text x="941.42" y="493" font-family="Liberation Serif" font-size="14.25" fill="#008000" textLength="35.94" lengthAdjust="spacingAndGlyphs">23.50</text>
<text x="1322.04" y="493" font-family="Liberation Serif" font-size="14.25" fill="#008000" textLength="35.55" lengthAdjust="spacingAndGlyphs">44.31</text>
<text x="1684.13" y="493" font-family="Liberation Serif" font-size="14.25" fill="#ff0000" textLength="71.60" lengthAdjust="spacingAndGlyphs">0x3350706</text>
<text x="177.24" y="511" font-family="Liberation Serif" font-size="14.25" fill="#ff0000" textLength="43.21" lengthAdjust="spacingAndGlyphs">aida14</text>
<text x="561.35" y="511" font-family="Liberation Serif" font-size="14.25" fill="#008000" textLength="35.96" lengthAdjust="spacingAndGlyphs">57.88</text>
<text x="941.49" y="511" font-family="Liberation Serif" font-size="14.25" fill="#008000" textLength="35.81" lengthAdjust="spacingAndGlyphs">26.25</text>
<text x="1321.47" y="511" font-family="Liberation Serif" font-size="14.25" fill="#008000" textLength="35.99" lengthAdjust="spacingAndGlyphs">44.44</text>
<text x="1684.13" y="511" font-family="Liberation Serif" font-size="14.25" fill="#ff0000" textLength="71.60" lengthAdjust="spacingAndGlyphs">0x3350706</text>
<text x="177.43" y="529" font-family="Liberation Serif" font-size="14.25" fill="#ff0000" textLength="43.12" lengthAdjust="spacingAndGlyphs">aida15</text>
<text x="561.36" y="529" font-family="Liberation Serif" font-size="14.25" fill="#008000" textLength="35.93" lengthAdjust="spacingAndGlyphs">61.06</text>
<text x="941.36" y="529" font-family="Liberation Serif" font-size="14.25" fill="#008000" textLength="35.93" lengthAdjust="spacingAndGlyphs">25.06</text>
<text x="1321.78" y="529" font-family="Liberation Serif" font-size="14.25" fill="#008000" textLength="35.93" lengthAdjust="spacingAndGlyphs">44.62</text>
<text x="1684.13" y="529" font-family="Liberation Serif" font-size="14.25" fill="#ff0000" textLength="71.60" lengthAdjust="spacingAndGlyphs">0x3350706</text>
<text x="177.31" y="547" font-family="Liberation Serif" font-size="14.25" fill="#ff0000" textLength="43.23" lengthAdjust="spacingAndGlyphs">aida16</text>
<text x="561.30" y="547" font-family="Liberation Serif" font-size="14.25" fill="#008000" textLength="35.91" lengthAdjust="spacingAndGlyphs">60.94</text>
<text x="941.42" y="547" font-family="Liberation Serif" font-size="14.25" fill="#008000" textLength="35.94" lengthAdjust="spacingAndGlyphs">24.88</text>
<text x="1321.66" y="547" font-family="Liberation Serif" font-size="14.25" fill="#008000" textLength="35.89" lengthAdjust="spacingAndGlyphs">42.75</text>
<text x="1684.13" y="547" font-family="Liberation Serif" font-size="14.25" fill="#ff0000" textLength="71.60" lengthAdjust="spacingAndGlyphs">0x3350706</text>
<text x="1354.60" y="581" font-family="Liberation Serif" font-size="14.25" fill="#ff0000" textLength="18.60" lengthAdjust="spacingAndGlyphs">No</text>
<text x="1377.09" y="581" font-family="Liberation Serif" font-size="14.25" fill="#ff0000" textLength="83.65" lengthAdjust="spacingAndGlyphs">Temperature</text>
<text x="1465.06" y="581" font-family="Liberation Serif" font-size="14.25" fill="#ff0000" textLength="52.73" lengthAdjust="spacingAndGlyphs">Logging</text>
<text x="6.22" y="612" font-family="Liberation Serif" font-size="14.25" fill="#ff0000" textLength="47.10" lengthAdjust="spacingAndGlyphs">System</text>
<text x="57.44" y="612" font-family="Liberation Serif" font-size="14.25" fill="#ff0000" textLength="59.90" lengthAdjust="spacingAndGlyphs">functions</text>
<text x="121.75" y="612" font-family="Liberation Serif" font-size="14.25" fill="#ff0000" textLength="48.07" lengthAdjust="spacingAndGlyphs">(Expert</text>
<text x="174.01" y="612" font-family="Liberation Serif" font-size="14.25" fill="#ff0000" textLength="34.78" lengthAdjust="spacingAndGlyphs">users</text>
<text x="212.99" y="612" font-family="Liberation Serif" font-size="14.25" fill="#ff0000" textLength="27.12" lengthAdjust="spacingAndGlyphs">only</text>
<text x="244.07" y="612" font-family="Liberation Serif" font-size="14.25" fill="#ff0000" textLength="18.68" lengthAdjust="spacingAndGlyphs">for</text>
<text x="266.89" y="612" font-family="Liberation Serif" font-size="14.25" fill="#ff0000" textLength="97.34" lengthAdjust="spacingAndGlyphs">test/debugging</text>
<text x="368.29" y="612" font-family="Liberation Serif" font-size="14.25" fill="#ff0000" textLength="78.89" lengthAdjust="spacingAndGlyphs">purposes!!!)</text>
<text x="1665.88" y="674" font-family="Liberation Serif" font-size="14.25" fill="#ff0000" textLength="27.46" lengthAdjust="spacingAndGlyphs">Last</text>
<text x="1697.80" y="674" font-family="Liberation Serif" font-size="14.25" fill="#ff0000" textLength="59.42" lengthAdjust="spacingAndGlyphs">Updated:</text>
<text x="1759.89" y="674" font-family="Liberation Serif" font-size="14.25" fill="#ff0000" textLength="30.49" lengthAdjust="spacingAndGlyphs">June</text>
<text x="1794.54" y="674" font-family="Liberation Serif" font-size="14.25" fill="#ff0000" textLength="19.93" lengthAdjust="spacingAndGlyphs">14,</text>
<text x="1818.94" y="674" font-family="Liberation Serif" font-size="14.25" fill="#ff0000" textLength="31.98" lengthAdjust="spacingAndGlyphs">2024</text>
<text x="1855.46" y="674" font-family="Liberation Serif" font-size="14.25" fill="#ff0000" textLength="56.33" lengthAdjust="spacingAndGlyphs">07:01:41</text>
<text x="433.07" y="580" font-family="Liberation Sans" font-size="11.5" fill="#000000" textLength="99.41" lengthAdjust="spacingAndGlyphs">Plot Temperature file</text>
<text x="465.54" y="612" font-family="Liberation Sans" font-size="11.5" fill="#000000" textLength="112.24" lengthAdjust="spacingAndGlyphs">Select required function</text>
<text x="9.89" y="643" font-family="Liberation Sans" font-size="11.5" fill="#000000" textLength="91.36" lengthAdjust="spacingAndGlyphs">Empty Log Window</text>
<text x="114.14" y="643" font-family="Liberation Sans" font-size="11.5" fill="#000000" textLength="124.60" lengthAdjust="spacingAndGlyphs">Send Log Window to ELog</text>
<text x="250.02" y="643" font-family="Liberation Sans" font-size="11.5" fill="#000000" textLength="32.41" lengthAdjust="spacingAndGlyphs">Reload</text>
<text x="294.03" y="643" font-family="Liberation Sans" font-size="11.5" fill="#000000" textLength="26.41" lengthAdjust="spacingAndGlyphs">Reset</text>
<text x="333.25" y="643" font-family="Liberation Sans" font-size="11.5" fill="#000000" textLength="71.14" lengthAdjust="spacingAndGlyphs">Show Variables</text>
<text x="416.54" y="643" font-family="Liberation Sans" font-size="11.5" fill="#000000" textLength="87.85" lengthAdjust="spacingAndGlyphs">Show Log Window</text>
<text x="516.61" y="643" font-family="Liberation Sans" font-size="11.5" fill="#000000" textLength="72.02" lengthAdjust="spacingAndGlyphs">Enable Logging</text>
<path d="M1231.3 48.3 L1239 56 M1239 48.3 L1231.3 56" stroke="#2e3436" stroke-width="1.1"/>
</svg>
</body></html>
